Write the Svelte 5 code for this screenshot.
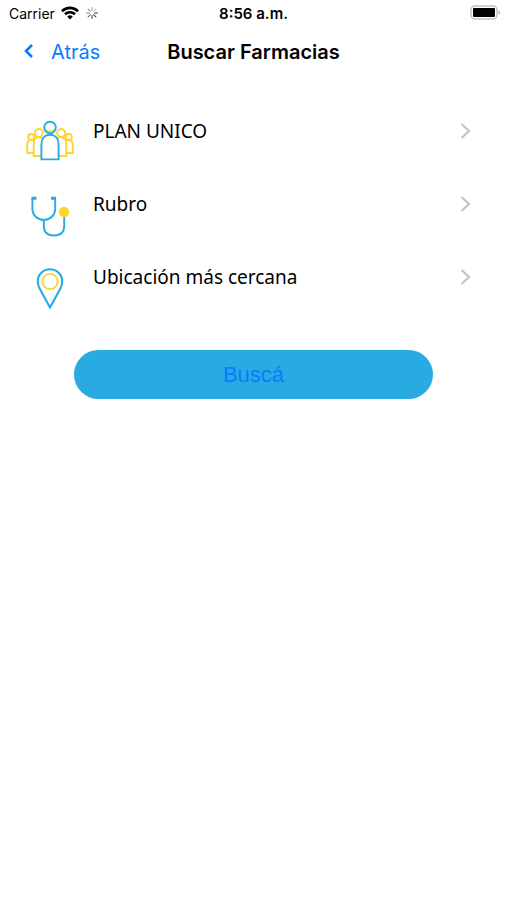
<script>
  let selected = null;

  const options = [
    { id: "plan", label: "PLAN UNICO" },
    { id: "rubro", label: "Rubro" },
    { id: "ubicacion", label: "Ubicación más cercana" },
  ];

  // spinner spokes, from dark to light
  const spokes = [0, 1, 2, 3, 4, 5, 6, 7];
</script>

<div class="app">
  <!-- Status bar -->
  <div class="status-bar">
    <div class="carrier">
      <span>Carrier</span>
      <svg width="18" height="14" viewBox="0 0 18 14" fill="none" stroke="#000" stroke-width="2.6">
        <path d="M1 5.2a11.4 11.4 0 0 1 16 0" />
        <path d="M4 8.3a7.2 7.2 0 0 1 10 0" />
        <path d="M9 13.5 6.2 10.7a4 4 0 0 1 5.6 0z" fill="#000" stroke="none" />
      </svg>
      <svg width="14" height="14" viewBox="0 0 14 14" stroke="#333" stroke-width="1.2" stroke-linecap="round">
        {#each spokes as i}
          <path d="M7 4.4V1.6" transform="rotate({i * 45 + 90} 7 7)" opacity={1 - i * 0.1} />
        {/each}
      </svg>
    </div>
    <span class="time">8:56 a.m.</span>
    <svg class="battery" width="31" height="16" viewBox="0 0 31 16">
      <rect x="1" y="1" width="26" height="13" rx="4" fill="#fff" stroke="#c4c4c4" stroke-width="1.6" />
      <rect x="3" y="3" width="22" height="9" rx="1" fill="#000" />
      <path d="M28.5 5.5c2 .6 2 3.4 0 4z" fill="#aaa" />
    </svg>
  </div>

  <!-- Navigation -->
  <header class="nav-bar">
    <button class="back">
      <svg width="12" height="16" viewBox="0 0 12 16" fill="none" stroke="#087cff" stroke-width="2.6">
        <path d="M10 1 4 7l6 6" />
      </svg>
      Atrás
    </button>
    <h1>Buscar Farmacias</h1>
  </header>

  <main>
    <div class="options">
      {#each options as option}
        <button class="option" on:click={() => (selected = option.id)}>
          <svg width="48" height="48" viewBox="0 0 48 48" fill="none" stroke-width="1.9">
            {#if option.id === "plan"}
              <g stroke="#fcd535">
                <circle cx="5.2" cy="19" r="3" />
                <circle cx="42.8" cy="19" r="3" />
                <path d="M7.6 35H1.2v-8c0-3 1.5-5 4-5 1.4 0 2.4.5 3 1.3" />
                <path d="M40.4 35h6.4v-8c0-3-1.5-5-4-5-1.4 0-2.4.5-3 1.3" />
                <circle cx="12.8" cy="15" r="4" />
                <circle cx="35.2" cy="15" r="4" />
                <path d="M15 38H7.7V26c0-4.500 2-7 5.300-7 1.600 0 2.800.6 3.600 1.600" />
                <path d="M33 38h7.300V26c0-4.500-2-7-5.300-7-1.600 0-2.800.6-3.600 1.600" />
                <path d="M19 11.500q5 4 10 0" />
              </g>
              <g stroke="#29abe2">
                <circle cx="24" cy="9.500" r="5.800" />
                <path d="M15.400 41.400V26.500c0-6 3.500-9.700 8.600-9.700s8.600 3.700 8.600 9.700v14.900z" />
              </g>
            {:else if option.id === "rubro"}
              <g stroke="#29abe2">
                <path d="M6.400 7v11a11.400 11 0 0 0 22.800 0V7" />
                <path d="M5.500 7.300h5M25 7.300h5" stroke-width="3" />
                <path d="M17.800 29v6c0 6.500 4 9.500 10.200 9.500S38.200 41.500 38.200 35V24" />
              </g>
              <circle cx="38" cy="21" r="5.200" fill="#fcd535" />
            {:else}
              <path
                d="M24 43.500 13.600 24.500C12 21.500 11.800 19.500 11.800 17a12.200 11.800 0 0 1 24.400 0c0 2.500-.2 4.500-1.800 7.500z"
                stroke="#29abe2"
                stroke-width="2.100"
              />
              <circle cx="24" cy="17.500" r="7.600" stroke="#fcd535" />
            {/if}
          </svg>
          <span class="label">{option.label}</span>
          <svg class="chevron" width="12" height="26" viewBox="0 0 12 26" fill="none" stroke="#c4c4c6" stroke-width="2.200">
            <path d="M2.500 6 10 13l-7.500 7" />
          </svg>
        </button>
      {/each}
    </div>

    <button class="search">Buscá</button>
  </main>
</div>

<style>
  :global(body) {
    margin: 0;
    background: #fff;
    color: #000;
    font-family: Inter, "Liberation Sans", sans-serif;
  }

  button {
    margin: 0;
    padding: 0;
    border: none;
    background: none;
    font-family: inherit;
    cursor: pointer;
  }

  svg {
    display: block;
    flex: none;
  }

  .status-bar {
    display: grid;
    grid-template-columns: 1fr auto 1fr;
    align-items: center;
    height: 26px;
    padding: 0 6px;
    font-size: 14px;
  }

  .carrier {
    display: flex;
    align-items: center;
    gap: 6px;
    padding-left: 3px;
  }

  .time {
    font-size: 15px;
    font-weight: 600;
  }

  .battery {
    justify-self: end;
  }

  .nav-bar {
    display: grid;
    grid-template-columns: 1fr auto 1fr;
    align-items: center;
    height: 52px;
    padding: 0 22px;
  }

  .back {
    display: flex;
    align-items: center;
    gap: 17px;
    color: #087cff;
    font-size: 20px;
    line-height: 24px;
  }

  h1 {
    margin: 0;
    font-size: 20px;
    font-weight: 600;
    line-height: 24px;
  }

  .options {
    display: flex;
    flex-direction: column;
    padding: 26px 36px 0 26px;
  }

  .option {
    display: flex;
    align-items: flex-start;
    gap: 19px;
    padding: 14px 0 11px;
    color: #000;
    text-align: left;
  }

  .label {
    flex: 1;
    font-family: "Noto Sans", sans-serif;
    font-size: 19px;
    line-height: 26px;
  }

  .search {
    display: block;
    width: calc(100% - 148px);
    height: 49px;
    margin: 27px auto 0;
    border-radius: 25px;
    background: #29abe2;
    color: #087cff;
    font-family: "Liberation Sans", sans-serif;
    font-size: 22px;
  }
</style>
